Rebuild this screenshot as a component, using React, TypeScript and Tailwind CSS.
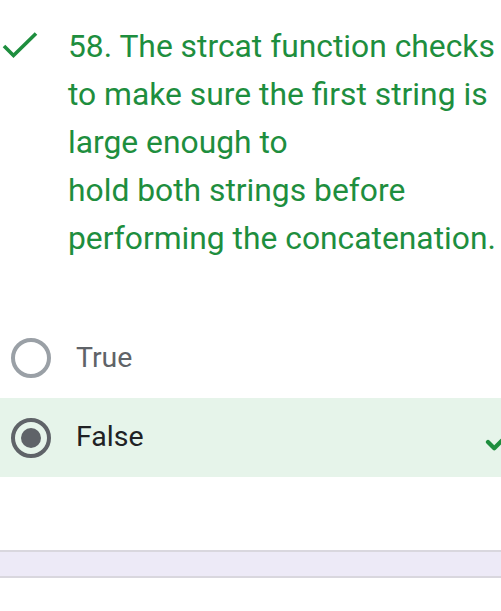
import { Check } from "lucide-react";

const font = { fontFamily: "Roboto, 'Noto Sans', sans-serif" };

function Radio({ checked }: { checked: boolean }) {
  return (
    <div
      className={
        "flex h-[40px] w-[40px] shrink-0 items-center justify-center rounded-full border-[4px] " +
        (checked ? "border-[#5f6368]" : "border-[#9aa0a6]")
      }
    >
      {checked && <div className="h-[20px] w-[20px] rounded-full bg-[#5f6368]" />}
    </div>
  );
}

export default function App() {
  return (
    <div className="relative h-[611px] w-[501px] overflow-hidden bg-white" style={font}>
      {/* question */}
      <div className="flex pt-[22px]">
        <div className="w-[68px] shrink-0 pt-[10px]">
          <svg width="40" height="30" viewBox="0 0 40 30" className="ml-[1px]">
            <path d="M3 14 L12.5 23.5 L35 1.5" fill="none" stroke="#1e8e3e" strokeWidth="3.6" />
          </svg>
        </div>
        <p className="w-[433px] text-[31.8px] leading-[48px] text-[#1e8e3e]">
          58. The strcat function checks to make sure the first string is large enough to
          <br />
          hold both strings before performing the concatenation.
        </p>
      </div>

      {/* options */}
      <div className="mt-[56px]">
        <div className="flex h-[80px] items-center gap-[25px] pl-[11px]">
          <Radio checked={false} />
          <span className="text-[28.5px] text-[#5f6368]">True</span>
        </div>
        <div className="relative flex h-[79px] items-center gap-[25px] bg-[#e6f4ea] pl-[11px]">
          <Radio checked />
          <span className="text-[28.5px] text-[#202124]">False</span>
          <Check
            className="absolute left-[483px] top-[29px] h-[30px] w-[30px] text-[#1e8e3e]"
            strokeWidth={3.4}
            absoluteStrokeWidth
          />
        </div>
      </div>

      {/* bottom bar */}
      <div className="mt-[73px] h-[28px] border-y-2 border-[#d9d7de] bg-[#edeaf7]" />
    </div>
  );
}
